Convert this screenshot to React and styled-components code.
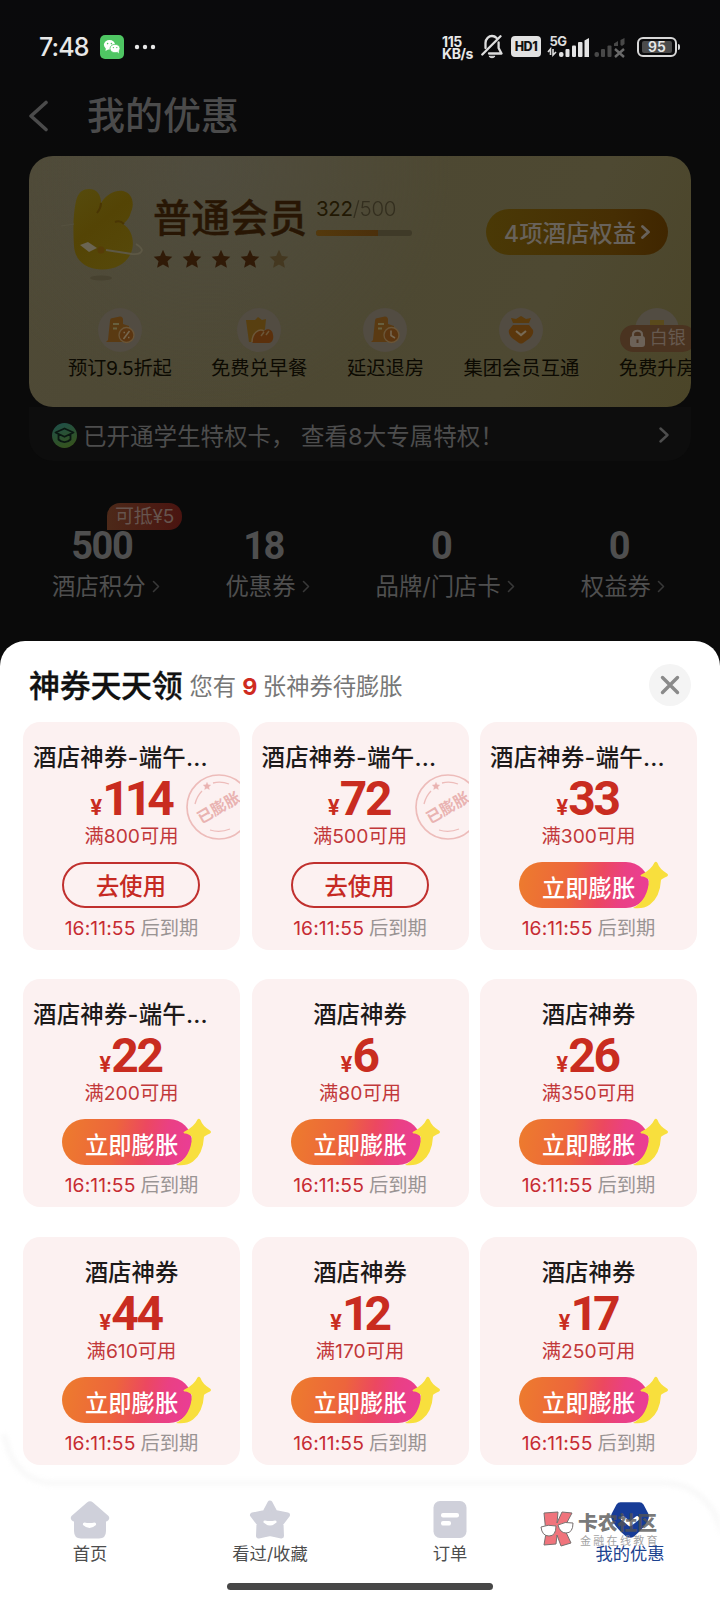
import React from 'react';
import styled, { createGlobalStyle } from 'styled-components';

const GlobalStyle = createGlobalStyle`
  * {
    box-sizing: border-box;
  }

  body {
    margin: 0;
    background: #0a0a0b;
    font-family: Inter, "Noto Sans CJK SC", sans-serif;
  }

  svg {
    display: block;
    flex: none;
  }
`;

const Screen = styled.div`
  width: 720px;
  height: 1600px;
  overflow: hidden;
  display: flex;
  flex-direction: column;
  background: linear-gradient(#0a0a0c, #0a0a0a 160px);
`;

const StatusBar = styled.div`
  height: 93px;
  padding: 0 40px 0 39px;
  display: flex;
  align-items: center;
  justify-content: space-between;
  color: #e8e8e8;
`;

const StatusGroup = styled.div`
  display: flex;
  align-items: center;
`;

const Clock = styled.span`
  width: 61px;
  font-size: 25px;
  font-weight: 500;
  letter-spacing: -0.9px;
`;

const Speed = styled.div`
  width: 39px;
  padding-top: 2px;
  font-size: 14px;
  line-height: 12px;
  font-weight: 700;
  letter-spacing: -0.4px;
`;

const HdBadge = styled.span`
  width: 30px;
  height: 21px;
  margin: 0 7px 0 8px;
  border-radius: 4px;
  background: #e2e2e2;
  color: #111;
  font-size: 12.5px;
  line-height: 21px;
  font-weight: 800;
  text-align: center;
  letter-spacing: -0.4px;
`;

const Battery = styled.div`
  width: 40px;
  height: 20px;
  margin-left: 12px;
  padding: 2px 3px;
  border: 2px solid #d8d8d8;
  border-radius: 6px;
`;

const BatteryLevel = styled.div`
  height: 12px;
  border-radius: 2px;
  background: #4b4b4b;
  font-size: 14px;
  line-height: 12px;
  font-weight: 600;
  text-align: center;
`;

const BatteryTip = styled.div`
  width: 2px;
  height: 6px;
  margin-left: 1px;
  border-radius: 0 2px 2px 0;
  background: #d8d8d8;
`;

const Header = styled.div`
  height: 62.5px;
  padding: 0 28px 16px;
  display: flex;
  align-items: center;
  gap: 39px;
  color: #4b4b4b;
  font-size: 38px;
  font-weight: 500;
`;

const HeaderTitle = styled.span`
  margin-top: -7px;
`;

const MemberCard = styled.div`
  height: 251.5px;
  margin: 0 29px;
  border-radius: 24px;
  overflow: hidden;
  background:
    radial-gradient(circle at 27% 5%, rgba(80, 77, 64, 0.8), transparent 45%),
    linear-gradient(115deg, #4f4a37, #4d4832 50%, #4e4932 75%, #4b4528);
`;

const MemberTop = styled.div`
  height: 140px;
  padding: 30px 23px 0 41px;
  display: flex;
`;

const LevelBox = styled.div`
  width: 160px;
  margin-left: 13px;
  padding-top: 9px;
`;

const LevelName = styled.div`
  font-size: 38.5px;
  line-height: 46px;
  font-weight: 500;
  color: #281604;
  -webkit-text-stroke: 0.4px #281604;
  white-space: nowrap;
`;

const Stars = styled.div`
  display: flex;
  gap: 9px;
  margin-top: 8px;
`;

const Growth = styled.div`
  width: 98px;
  padding-top: 13px;
  margin-left: 3px;
  font-size: 20.5px;
  line-height: 20px;
  letter-spacing: -0.3px;
  white-space: nowrap;
  color: #211803;

  span {
    color: #2f2a1b;
    font-weight: 300;
    opacity: 0.85;
  }
`;

const GrowthTrack = styled.div`
  width: 96px;
  height: 6px;
  margin-top: 11px;
  border-radius: 3px;
  background: #3f3a28;
`;

const GrowthFill = styled.div`
  height: 6px;
  border-radius: 3px 0 0 3px;
  background: linear-gradient(90deg, #54390c, #4b2f0b);
`;

const RightsButton = styled.div`
  width: 182px;
  height: 46px;
  margin: 23px 0 0 auto;
  border-radius: 23px;
  display: flex;
  align-items: center;
  justify-content: center;
  gap: 5px;
  background: linear-gradient(90deg, #4a3906, #462e03 70%, #402600);
  color: #68625b;
  font-size: 23.4px;
  font-weight: 500;
  white-space: nowrap;
`;

const Benefits = styled.div`
  display: flex;
  gap: 39.5px;
  padding: 12px 0 0 39px;
`;

const Benefit = styled.div`
  flex: none;
  display: flex;
  flex-direction: column;
  align-items: center;
  position: relative;
  font-size: 19.3px;
  line-height: 28px;
  white-space: nowrap;
  letter-spacing: ${(p) => p.$tight ? '-0.3px' : '0'};
  color: #0c0a02;
`;

const BenefitIcon = styled.div`
  width: 44px;
  height: 44px;
  margin-bottom: 2px;
  border-radius: 50%;
  display: flex;
  align-items: center;
  justify-content: center;
  background: #524c42;
`;

const LockBadge = styled.div`
  position: absolute;
  top: 17px;
  left: 1px;
  width: 76px;
  height: 27px;
  padding-left: 9px;
  border-radius: 14px;
  display: flex;
  align-items: center;
  gap: 4px;
  background: #4a3320;
  color: #66594f;
  font-size: 18px;
`;

const StudentBar = styled.div`
  height: 54px;
  margin: 0 29px;
  padding: 2px 22px 0 23px;
  border-radius: 0 0 24px 24px;
  display: flex;
  align-items: center;
  background: #0d0d0d;
  color: #4d4d4d;
  font-size: 23.5px;
`;

const StudentText = styled.span`
  flex: 1;
  margin-left: 6px;
  white-space: pre;
`;

const Stats = styled.div`
  height: 180px;
  padding: 64px 55px 0 52px;
  display: flex;
  justify-content: space-between;
`;

const Stat = styled.div`
  position: relative;
  height: 80px;
  color: #4f4f4f;
`;

const StatValue = styled.div`
  padding-right: 8px;
  text-align: center;
  font-family: Roboto, sans-serif;
  font-size: 38px;
  line-height: 42px;
  font-weight: 700;
  letter-spacing: -1.4px;
`;

const StatLabel = styled.div`
  display: flex;
  align-items: center;
  gap: 6px;
  margin-top: 3px;
  font-size: 23.4px;
  line-height: 33px;
  white-space: nowrap;
`;

const StatBadge = styled.div`
  position: absolute;
  top: -22px;
  left: 55px;
  width: 75px;
  height: 27px;
  border-radius: 13px 13px 13px 0;
  background: linear-gradient(90deg, #4d2919, #4a1410);
  color: #66544e;
  font-size: 19px;
  line-height: 28px;
  text-align: center;
  letter-spacing: -0.2px;
`;

const Sheet = styled.div`
  height: 959px;
  border-radius: 25px 25px 0 0;
  background: #fff;
  display: flex;
  flex-direction: column;
`;

const SheetHead = styled.div`
  height: 81px;
  padding: 7px 29px 0 29px;
  display: flex;
  align-items: center;
`;

const SheetTitle = styled.h1`
  margin: -4px 0 0;
  font-size: 31px;
  font-weight: 500;
  color: #111;
  -webkit-text-stroke: 0.3px #111;
  letter-spacing: -0.3px;
`;

const SheetSub = styled.p`
  margin: -1px auto 0 7px;
  font-size: 23.3px;
  word-spacing: -0.5px;
  color: #777;

  b {
    color: #cf2b1f;
    font-weight: 700;
    letter-spacing: -0.5px;
  }
`;

const CloseButton = styled.button`
  width: 42px;
  height: 42px;
  padding: 0;
  border: 0;
  border-radius: 50%;
  background: #f4f4f4;
  display: flex;
  align-items: center;
  justify-content: center;
`;

const CouponGrid = styled.div`
  flex: none;
  padding: 0 23px;
  display: grid;
  grid-template-columns: repeat(3, 217px);
  grid-auto-rows: 228px;
  gap: 29.3px 11.5px;
`;

const CouponCard = styled.div`
  position: relative;
  overflow: hidden;
  border-radius: 17px;
  background: #fcf1f1;
  padding-top: 19px;
  display: flex;
  flex-direction: column;
  align-items: center;
`;

const CouponTitle = styled.div`
  align-self: ${(p) => p.$long ? 'flex-start' : 'center'};
  padding-left: ${(p) => p.$long ? '10px' : '0'};
  font-size: 23.4px;
  line-height: 34px;
  font-weight: 500;
  letter-spacing: ${(p) => p.$long ? '0.25px' : '0'};
  color: #1d1a1a;
  white-space: nowrap;
`;

const Price = styled.div`
  height: 48px;
  display: flex;
  align-items: baseline;
  color: #c92c20;
`;

const Currency = styled.span`
  font-family: Inter, sans-serif;
  font-size: 21px;
  line-height: 1;
  font-weight: 700;
`;

/* Roboto's figures are all one width, so a price with a 1 in it is set tighter */
const Amount = styled.span`
  margin-right: ${(p) => p.$hasOne ? '3px' : '2px'};
  font-family: Roboto, sans-serif;
  font-size: 48px;
  line-height: 47px;
  font-weight: 700;
  letter-spacing: ${(p) => p.$hasOne ? '-5px' : '-2.4px'};
`;

const Condition = styled.div`
  margin-top: -1px;
  font-size: 19.3px;
  line-height: 28px;
  color: #c2383a;
`;

const UseButton = styled.button`
  width: 138px;
  height: 46px;
  margin: 12px 1px 0 0;
  padding: 0;
  border: 2px solid #c0302e;
  border-radius: 23px;
  background: transparent;
  color: #c62a23;
  font-family: inherit;
  font-size: 23.3px;
  font-weight: 500;
`;

const BoostButton = styled.button`
  position: relative;
  width: 130px;
  height: 46px;
  margin: 12px 9px 0 0;
  padding: 4px 0 0 23px;
  border: 0;
  border-radius: 23px;
  background: linear-gradient(100deg, #ed7c2d, #ed653c 40%, #ec4860 62%, #ea4083 78%, #ea3d98);
  color: #fff;
  font-family: inherit;
  font-size: 23.3px;
  font-weight: 500;
  text-align: left;
  white-space: nowrap;
`;

const Arrow = styled.svg`
  position: absolute;
  left: 112px;
  top: -1px;
`;

const Expiry = styled.div`
  margin-top: 6px;
  font-size: 19.3px;
  line-height: 28px;
  color: #9a9494;
  white-space: nowrap;

  span {
    margin-right: 5px;
    color: #c72b33;
    letter-spacing: 0.1px;
  }
`;

const Stamp = styled.div`
  position: absolute;
  left: 163px;
  top: 52px;
  width: 66px;
  height: 66px;
  color: #e9b3b1;

  svg {
    position: absolute;
    inset: 0;
  }

  span {
    position: absolute;
    left: 3px;
    top: 22px;
    width: 60px;
    font-size: 15.5px;
    line-height: 24px;
    font-weight: 700;
    text-align: center;
    transform: rotate(-30deg);
  }
`;

const TabBar = styled.nav`
  position: relative;
  height: 135px;
  margin-top: auto;
  padding: 35px 0 0;
  display: flex;
  flex: none;
`;

const TabEdge = styled.svg`
  position: absolute;
  left: 0;
  top: -35px;
  filter: blur(2px);
`;

const Tab = styled.div`
  position: relative;
  width: 180px;
  display: flex;
  flex-direction: column;
  align-items: center;
  font-size: 17.3px;
  line-height: 28px;
  color: ${(p) => p.$active ? '#1d4390' : '#4d4d4d'};
`;

const HomeIndicator = styled.div`
  position: absolute;
  left: 227px;
  bottom: 10px;
  width: 266px;
  height: 7px;
  border-radius: 4px;
  background: #474747;
`;

const Watermark = styled.div`
  position: absolute;
  left: 540px;
  top: 46px;
  display: flex;
  gap: 4px;
  white-space: nowrap;
`;

const WatermarkName = styled.div`
  margin-top: 2px;
  font-size: 19.8px;
  line-height: 21px;
  font-weight: 800;
  color: rgba(85, 85, 85, 0.8);
`;

const WatermarkNote = styled.div`
  padding: 1px 0 0 2px;
  font-size: 11px;
  line-height: 13px;
  letter-spacing: 2.3px;
  color: #a3a3a3;
`;

const coupons = [
  { title: '酒店神券-端午...', price: 114, min: 800, used: true },
  { title: '酒店神券-端午...', price: 72, min: 500, used: true },
  { title: '酒店神券-端午...', price: 33, min: 300 },
  { title: '酒店神券-端午...', price: 22, min: 200 },
  { title: '酒店神券', price: 6, min: 80 },
  { title: '酒店神券', price: 26, min: 350 },
  { title: '酒店神券', price: 44, min: 610 },
  { title: '酒店神券', price: 12, min: 170 },
  { title: '酒店神券', price: 17, min: 250 },
];

const stats = [
  { value: 500, label: '酒店积分', badge: '可抵¥5' },
  { value: 18, label: '优惠券' },
  { value: 0, label: '品牌/门店卡' },
  { value: 0, label: '权益券' },
];

const STAR = 'M10 0.8 L12.8 7 L19.3 7.7 L14.5 12.2 L15.9 18.8 L10 15.5 L4.1 18.8 L5.5 12.2 L0.7 7.7 L7.2 7 Z';

const Chevron = ({ width = 7, height = 12, stroke = 2, color = 'currentColor' }) => (
  <svg width={width} height={height} viewBox={`0 0 ${width} ${height}`} fill="none">
    <path
      d={`M1.5 1.5 L${width - 1.5} ${height / 2} L1.5 ${height - 1.5}`}
      stroke={color}
      strokeWidth={stroke}
      strokeLinecap="round"
      strokeLinejoin="round"
    />
  </svg>
);

const WechatIcon = () => (
  <svg width="24" height="24" viewBox="0 0 24 24">
    <rect width="24" height="24" rx="5" fill="#4fc663" />
    <ellipse cx="9.5" cy="9.8" rx="5.6" ry="4.8" fill="#fff" />
    <path d="M6 12 L5.5 16 L9 14 Z" fill="#fff" />
    <ellipse cx="15" cy="13.5" rx="5" ry="4.2" fill="#fff" stroke="#4fc663" strokeWidth="0.8" />
    <path d="M17 16.5 L18.7 18.6 L18.8 15.5 Z" fill="#fff" />
    <g fill="#4fc663">
      <circle cx="7.6" cy="8.6" r="0.8" />
      <circle cx="11.4" cy="8.6" r="0.8" />
      <circle cx="13.4" cy="12.6" r="0.7" />
      <circle cx="16.8" cy="12.6" r="0.7" />
    </g>
  </svg>
);

const BellOffIcon = () => (
  <svg width="22" height="25" viewBox="0 0 22 25" fill="none" stroke="#dedede" strokeWidth="2.3" strokeLinecap="round" strokeLinejoin="round">
    <path d="M1.3 20.5 L19.5 2.2" />
    <path d="M4.5 14 V9 C4.5 4.5 8 2 11 2 C13 2 14.5 2.8 15.6 4" />
    <path d="M17.6 8.5 V14 L20.5 19.5 H8" />
    <path d="M8.2 22.6 C9.5 24.2 12.5 24.2 13.8 22.6 Z" fill="#dedede" strokeWidth="1" />
  </svg>
);

const SignalIcon = () => (
  <svg width="77" height="23" viewBox="0 0 77 23" overflow="visible">
    <text x="1.5" y="10.5" fontSize="13" fontWeight="700" fill="#dedede" letterSpacing="-0.5">5G</text>
    <path d="M0 17 L2.5 14 V20 M5 14 V20 L8 17" stroke="#dedede" strokeWidth="1.6" fill="none" />
    <g fill="#e4e4e4">
      <rect x="11" y="17" width="4.5" height="5" rx="2" />
      <rect x="17.5" y="14" width="4" height="8" rx="1" />
      <rect x="24" y="10.5" width="4" height="11.5" rx="1" />
      <rect x="30" y="7" width="4.5" height="15" rx="1" />
      <path d="M36.5 5.5 L41 3 V22 H36.5 Z" />
    </g>
    <g fill="#484848">
      <rect x="46.5" y="17" width="4.5" height="5" rx="2" />
      <rect x="53" y="14" width="4" height="8" rx="1" />
      <rect x="59.5" y="10.5" width="4" height="11.5" rx="1" />
      <path d="M66 8.5 L70 6 V11 H66 Z M72.5 5 L76.5 3 V9 L74 11 L72.5 10 Z" />
    </g>
    <path d="M67 14 L76 22 M76 14 L67 22" stroke="#6a6a6a" strokeWidth="2.4" />
  </svg>
);

const Mascot = () => (
  <svg width="70" height="98" viewBox="0 0 70 98" overflow="visible">
    <defs>
      <linearGradient id="mascot" x1="0" y1="0" x2="0.6" y2="1">
        <stop offset="0" stopColor="#564b0d" />
        <stop offset="0.5" stopColor="#544405" />
        <stop offset="1" stopColor="#564809" />
      </linearGradient>
    </defs>
    <ellipse cx="31" cy="92" rx="11" ry="2.5" fill="#474230" />
    <path
      d="M19 3 C27 3 31 9 31 17 C37 8 45 4 53 5 C62 7 65 17 61 26 C60 31 57 35 53 38 C64 45 65 60 60 69 C55 79 43 84 31 83.5 C16 83 5 75 4 60 C3 45 3 28 6 15 C8 7 12 3 19 3 Z"
      fill="url(#mascot)"
    />
    <path d="M31 17 Q31 22 27 27 M54 38 Q50 34 45 36" stroke="#4a3604" strokeWidth="2" fill="none" />
    <path d="M-9 40 L4 38" stroke="#55513f" strokeWidth="1" />
    <path d="M36 64 L62 68 Q71 69 72 64 Q71 61 66 58" stroke="#5d5845" strokeWidth="1.8" fill="none" />
    <path d="M10 59 L18 56 L27 62 L19 66 Z" fill="#6b6553" />
    <circle cx="31" cy="64" r="3.5" fill="#573c07" />
  </svg>
);

const HotelBenefitIcon = ({ clock }) => (
  <svg width="30" height="28" viewBox="0 0 30 28">
    <path d="M5 5 C5 3 6 2 8 2 L15 0.5 C17 0.5 18 2 18 4 V8 L24 10 V26 H1 L3 24 Z" fill="#5a3a12" />
    <path d="M8 8 H14 M8 12.5 H12" stroke="#68603f" strokeWidth="1.8" />
    <circle cx="21.5" cy="19" r="7.5" fill="#5b3510" stroke="#6a5538" strokeWidth="1.4" />
    {clock
      ? <path d="M21 14.5 V19.5 L25 22" stroke="#766750" strokeWidth="1.6" fill="none" />
      : <path d="M24.5 15 L18.5 23 M18.5 16.5 H20 M23 21.5 H24.5" stroke="#766750" strokeWidth="1.6" />}
  </svg>
);

const BreakfastIcon = () => (
  <svg width="30" height="28" viewBox="0 0 30 28">
    <path d="M2 4 L11 4 L14 1 L18 4 L22 3 L21 13 L14 26 L5 26 Z" fill="#583f10" />
    <path d="M8 26 C8 17 15 12 20 15 C24 11 29 14 29 19 C30 23 28 27 25 27 H9 Z" fill="#5b300c" />
    <path d="M8 26 C8 17 15 12 20 15 M17 20 L20 16 M22 19 L25 15" stroke="#6b5638" strokeWidth="1.5" fill="none" />
  </svg>
);

const CrownIcon = () => (
  <svg width="30" height="30" viewBox="0 0 30 30">
    <path d="M5 3 L10 4 L15 1 L20 4 L25 3 L23 8 H7 Z" fill="#5b3b0c" />
    <path d="M7 10 H23 L27 15 Q28 19 24 23 L17 28 Q15 29 13 28 L6 23 Q2 19 3 15 Z" fill="#5b370c" />
    <path d="M10 16 L15 20 L20 16" stroke="#776a55" strokeWidth="2.2" fill="none" />
  </svg>
);

const RoomIcon = () => (
  <svg width="30" height="30" viewBox="0 0 30 30">
    <path d="M8 12 V5 H22 V12 L27 20 H3 Z" fill="#5a4a1c" />
  </svg>
);

const LockIcon = () => (
  <svg width="17" height="19" viewBox="0 0 17 19">
    <path d="M4 8 V5.5 C4 0.5 13 0.5 13 5.5 V8" stroke="#6c6258" strokeWidth="2.2" fill="none" />
    <rect x="1" y="7" width="15" height="11" rx="3" fill="#6c6258" />
    <path d="M8.5 10.5 V14" stroke="#4a3320" strokeWidth="2" />
  </svg>
);

const StudentIcon = () => (
  <svg width="25" height="25" viewBox="0 0 25 25">
    <defs>
      <linearGradient id="student" x1="0" y1="0" x2="0.4" y2="1">
        <stop offset="0" stopColor="#1d4f4c" />
        <stop offset="1" stopColor="#345320" />
      </linearGradient>
    </defs>
    <circle cx="12.5" cy="12.5" r="12.5" fill="url(#student)" />
    <path
      d="M3.5 9.5 L12.5 5.5 L21.5 9.5 L12.5 13.8 Z M6.5 11.5 V16.5 C10 20 15 20 18.5 16.5 V11.5"
      fill="none"
      stroke="#0a1712"
      strokeWidth="1.8"
      strokeLinejoin="round"
    />
  </svg>
);

const HomeIcon = () => (
  <svg width="40" height="40" viewBox="0 0 40 40">
    <path d="M17 2.5 Q20 0 23 2.5 L38.5 16 Q40 18 38.5 20 Q37 21.5 36 21.5 V31 Q36 38.5 29 38.5 H11 Q4 38.5 4 31 V21.5 Q3 21.5 1.5 20 Q0 18 1.5 16 Z" fill="#cfd0da" />
    <path d="M14.5 22.5 Q19.5 23.5 24.5 22.5 Q26.5 22.5 26 25 Q19.5 31 13 25 Q12.5 22.5 14.5 22.5 Z" fill="#fff" />
  </svg>
);

const FavoriteIcon = () => (
  <svg width="42" height="40" viewBox="0 0 42 40">
    <path
      d="M21 3 L26 12.5 L38.5 15 L32 23.5 L32.5 36 L21 33.5 L9.5 36 L10 23.5 L3.5 15 L16 12.5 Z"
      fill="#cfd0da"
      stroke="#cfd0da"
      strokeWidth="5"
      strokeLinejoin="round"
    />
    <path d="M16 20.5 Q21 21.5 26 20.5 Q28 20.5 27.5 22.5 Q21 28.5 14.5 22.5 Q14 20.5 16 20.5 Z" fill="#fff" />
  </svg>
);

const OrderIcon = () => (
  <svg width="34" height="40" viewBox="0 0 34 40">
    <rect x="0.5" y="1" width="33" height="37" rx="6.5" fill="#cfd0da" />
    <rect x="8" y="13" width="18" height="4.5" rx="2" fill="#fff" />
    <rect x="8" y="21" width="10" height="4.5" rx="2" fill="#fff" />
  </svg>
);

const DealsIcon = () => (
  <svg width="40" height="40" viewBox="0 0 40 40">
    <path
      d="M10.5 2.2 H29.5 Q32 2.2 33.5 4.5 L38.5 14 Q39.5 17 38 20 Q35 27 24 36.5 Q20 39 16 36.5 Q5 27 2 20 Q0.5 17 1.5 14 L6.5 4.5 Q8 2.2 10.5 2.2 Z"
      fill="#173c97"
    />
    <path d="M13 18.5 L20 24 L27 18.5" stroke="#fff" strokeWidth="4.5" strokeLinecap="round" strokeLinejoin="round" fill="none" />
  </svg>
);

const WatermarkLogo = () => (
  <svg width="34" height="37" viewBox="0 0 34 37" stroke="#77706f" strokeWidth="1">
    <path d="M4 2 L18 1 L17 12 L22 1 L32 2 L24 17 L31 32 L21 35 L17 24 L16 33 L4 34 L6 22 Z" fill="#f0747c" />
    <path d="M1 16 Q8 13 16 15 Q16 25 9 25 Q2 25 1 16 Z M18 14 Q25 10 33 12 Q33 22 26 22 Q20 22 18 14 Z" fill="#fff" />
  </svg>
);

const Coupon = ({ title, price, min, used }) => (
  <CouponCard>
    <CouponTitle $long={title.length > 4}>{title}</CouponTitle>
    <Price>
      <Currency>¥</Currency>
      <Amount $hasOne={String(price).includes('1')}>{price}</Amount>
    </Price>
    <Condition>满{min}可用</Condition>
    {used ? (
      <UseButton>去使用</UseButton>
    ) : (
      <BoostButton>
        立即膨胀
        <Arrow width="40" height="50" viewBox="0 0 40 50">
          <path
            d="M23.5 1.5 Q25 0 26.5 2 Q28.5 8 36 12.5 Q38 14 36 15.5 Q31 17.5 30 19 Q29 36 19 43.5 Q12 48.5 2 47 Q17 39 18 19 Q14 15 10.5 15.5 Q8.5 14.5 10.5 13.5 Q20 9 23.5 1.5 Z"
            fill="#f8df3d"
          />
        </Arrow>
      </BoostButton>
    )}
    <Expiry><span>16:11:55</span>后到期</Expiry>
    {used && (
      <Stamp>
        <svg width="66" height="66" viewBox="0 0 66 66" fill="none" stroke="#edbcba">
          <circle cx="33" cy="33" r="32" strokeWidth="1.7" />
          <path d="M9 30 Q11 22 16 17 M27 9 Q35 7 43 10 M24 56 Q34 59 44 55" strokeWidth="1.3" />
          <path d={STAR} transform="translate(17 8) scale(0.4)" fill="#e9b3b1" />
        </svg>
        <span>已膨胀</span>
      </Stamp>
    )}
  </CouponCard>
);

const App = () => {
  return (
    <>
      <GlobalStyle />
      <Screen>
        <StatusBar>
          <StatusGroup>
            <Clock>7:48</Clock>
            <WechatIcon />
            <svg width="32" height="6" viewBox="0 0 32 6" fill="#e8e8e8">
              <circle cx="13" cy="3" r="2.2" />
              <circle cx="21" cy="3" r="2.2" />
              <circle cx="29" cy="3" r="2.2" />
            </svg>
          </StatusGroup>
          <StatusGroup>
            <Speed>115<br />KB/s</Speed>
            <BellOffIcon />
            <HdBadge>HD1</HdBadge>
            <SignalIcon />
            <Battery><BatteryLevel>95</BatteryLevel></Battery>
            <BatteryTip />
          </StatusGroup>
        </StatusBar>

        <Header>
          <svg width="20" height="32" viewBox="0 0 20 32" fill="none">
            <path d="M18 2.5 L3 16 L18 29.5" stroke="#4b4b4b" strokeWidth="3.6" strokeLinecap="round" strokeLinejoin="round" />
          </svg>
          <HeaderTitle>我的优惠</HeaderTitle>
        </Header>

        <MemberCard>
          <MemberTop>
            <Mascot />
            <LevelBox>
              <LevelName>普通会员</LevelName>
              <Stars>
                {[1, 2, 3, 4, 5].map((n) => (
                  <svg key={n} width="20" height="20" viewBox="0 0 20 20">
                    <path d={STAR} fill={n < 5 ? '#301a07' : '#443820'} />
                  </svg>
                ))}
              </Stars>
            </LevelBox>
            <Growth>
              322<span>/500</span>
              <GrowthTrack><GrowthFill style={{ width: `${(322 / 500) * 100}%` }} /></GrowthTrack>
            </Growth>
            <RightsButton>
              4项酒店权益
              <Chevron width={9} height={14} stroke={2.8} />
            </RightsButton>
          </MemberTop>
          <Benefits>
            <Benefit $tight>
              <BenefitIcon><HotelBenefitIcon /></BenefitIcon>
              预订9.5折起
            </Benefit>
            <Benefit>
              <BenefitIcon><BreakfastIcon /></BenefitIcon>
              免费兑早餐
            </Benefit>
            <Benefit>
              <BenefitIcon><HotelBenefitIcon clock /></BenefitIcon>
              延迟退房
            </Benefit>
            <Benefit>
              <BenefitIcon><CrownIcon /></BenefitIcon>
              集团会员互通
            </Benefit>
            <Benefit>
              <BenefitIcon><RoomIcon /></BenefitIcon>
              免费升房
              <LockBadge><LockIcon />白银</LockBadge>
            </Benefit>
          </Benefits>
        </MemberCard>

        <StudentBar>
          <StudentIcon />
          <StudentText>已开通学生特权卡， 查看8大专属特权！</StudentText>
          <Chevron width={10} height={16} stroke={2.4} />
        </StudentBar>

        <Stats>
          {stats.map((item) => (
            <Stat key={item.label}>
              {item.badge && <StatBadge>{item.badge}</StatBadge>}
              <StatValue>{item.value}</StatValue>
              <StatLabel>
                {item.label}
                <Chevron width={8} height={13} stroke={1.6} color="#383838" />
              </StatLabel>
            </Stat>
          ))}
        </Stats>

        <Sheet>
          <SheetHead>
            <SheetTitle>神券天天领</SheetTitle>
            <SheetSub>您有 <b>9</b> 张神券待膨胀</SheetSub>
            <CloseButton>
              <svg width="20" height="20" viewBox="0 0 20 20">
                <path d="M2.5 2.5 L17.5 17.5 M17.5 2.5 L2.5 17.5" stroke="#8a8a8a" strokeWidth="3.4" strokeLinecap="round" />
              </svg>
            </CloseButton>
          </SheetHead>
          <CouponGrid>
            {coupons.map((coupon, index) => (
              <Coupon key={index} {...coupon} />
            ))}
          </CouponGrid>

          <TabBar>
            <TabEdge width="720" height="110" viewBox="0 0 720 110" fill="none">
              <path d="M4 4 C10 34 26 51 50 53 H665 C695 54 716 75 722 105" stroke="#f9f9f9" strokeWidth="6" />
            </TabEdge>
            <Tab><HomeIcon />首页</Tab>
            <Tab><FavoriteIcon />看过/收藏</Tab>
            <Tab><OrderIcon />订单</Tab>
            <Tab $active><DealsIcon />我的优惠</Tab>
            <Watermark>
              <WatermarkLogo />
              <div>
                <WatermarkName>卡农社区</WatermarkName>
                <WatermarkNote>金融在线教育</WatermarkNote>
              </div>
            </Watermark>
            <HomeIndicator />
          </TabBar>
        </Sheet>
      </Screen>
    </>
  );
};

export default App;
